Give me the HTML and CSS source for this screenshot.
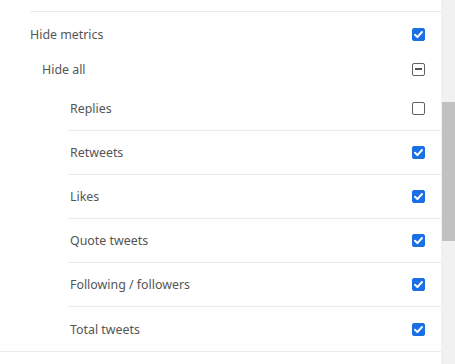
FILE: index.html
```html
<!DOCTYPE html>
<html>
<head>
<meta charset="utf-8">
<link rel="stylesheet" href="styles.css">
</head>
<body>
<div class="page">
  <main class="content">
    <section class="group">
      <div class="row header">
        <span class="label">Hide metrics</span>
        <span class="cb checked"><svg viewBox="0 0 13 13"><path d="M3 6.8 L5.4 9.1 L10 4" /></svg></span>
      </div>
      <div class="row sub">
        <span class="label">Hide all</span>
        <span class="cb mixed"><i></i></span>
      </div>
      <div class="items">
        <div class="row item">
          <span class="label">Replies</span>
          <span class="cb"></span>
        </div>
        <div class="row item">
          <span class="label">Retweets</span>
          <span class="cb checked"><svg viewBox="0 0 13 13"><path d="M3 6.8 L5.4 9.1 L10 4" /></svg></span>
        </div>
        <div class="row item">
          <span class="label">Likes</span>
          <span class="cb checked"><svg viewBox="0 0 13 13"><path d="M3 6.8 L5.4 9.1 L10 4" /></svg></span>
        </div>
        <div class="row item">
          <span class="label">Quote tweets</span>
          <span class="cb checked"><svg viewBox="0 0 13 13"><path d="M3 6.8 L5.4 9.1 L10 4" /></svg></span>
        </div>
        <div class="row item">
          <span class="label">Following / followers</span>
          <span class="cb checked"><svg viewBox="0 0 13 13"><path d="M3 6.8 L5.4 9.1 L10 4" /></svg></span>
        </div>
        <div class="row item last">
          <span class="label">Total tweets</span>
          <span class="cb checked"><svg viewBox="0 0 13 13"><path d="M3 6.8 L5.4 9.1 L10 4" /></svg></span>
        </div>
      </div>
    </section>
  </main>
  <div class="scrollbar"><div class="thumb"></div></div>
</div>
</body>
</html>
```
FILE: styles.css
```css
html, body {
  margin: 0;
  padding: 0;
  background: #ffffff;
}
body {
  font-family: "Noto Sans", "Open Sans", sans-serif;
  font-size: 12.4px;
  color: #555555;
}
.page {
  display: flex;
  width: 455px;
  height: 364px;
  overflow: hidden;
}
.content {
  flex: 1;
  padding-top: 11px;
}
.group {
  border-bottom: 1px solid #ebebeb;
}
.row {
  display: flex;
  align-items: center;
  justify-content: space-between;
  padding-right: 16px;
}
.header {
  margin-left: 30px;
  height: 44px;
  border-top: 1px solid #ebebeb;
}
.sub {
  margin-left: 42px;
  height: 26px;
}
.items {
  margin-left: 68px;
  padding-top: 5px;
}
.item {
  height: 43px;
  border-bottom: 1px solid #ebebeb;
}
.item .label {
  margin-left: 2px;
}
.item.last {
  border-bottom: none;
  height: 44px;
}
.cb {
  box-sizing: border-box;
  width: 13px;
  height: 13px;
  border: 1px solid #606060;
  border-radius: 2px;
  background: #fff;
  display: flex;
  align-items: center;
  justify-content: center;
}
.cb.checked {
  background: #1a6fe3;
  border-color: #1a6fe3;
}
.cb svg {
  width: 13px;
  height: 13px;
  flex: none;
}
.cb svg path {
  fill: none;
  stroke: #fff;
  stroke-width: 2;
  stroke-linecap: round;
  stroke-linejoin: round;
}
.cb.mixed i {
  display: block;
  width: 7px;
  height: 2px;
  background: #555;
}
.scrollbar {
  width: 14px;
  flex: none;
  background: #f1f1f1;
  display: flex;
  flex-direction: column;
  align-items: flex-end;
}
.thumb {
  margin-top: 102px;
  width: 13px;
  height: 139px;
  background: #c1c1c1;
}
```
